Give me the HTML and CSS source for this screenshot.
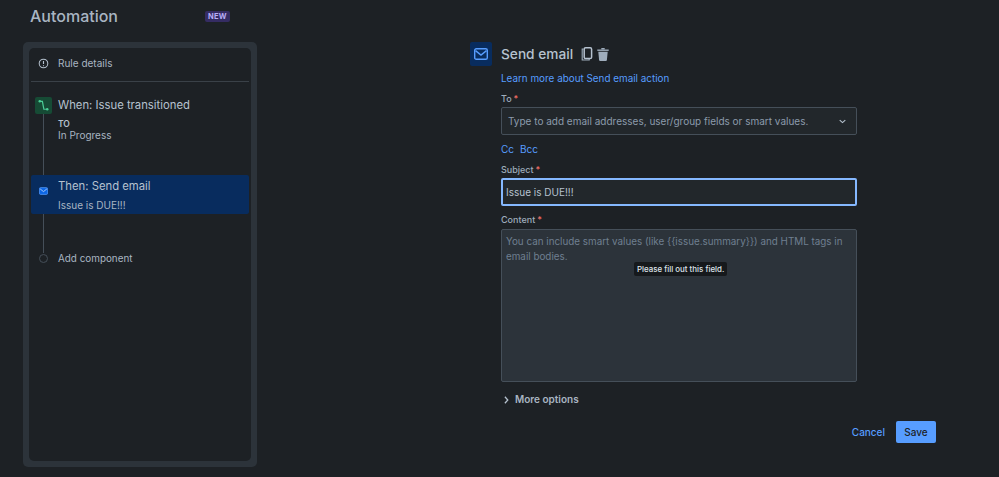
FILE: index.html
```html
<!DOCTYPE html>
<html lang="en">
<head>
<meta charset="utf-8">
<title>Automation</title>
<link rel="stylesheet" href="styles.css">
</head>
<body>
<div class="page">
  <aside class="left">
    <header class="head">
      <h1 class="title">Automation</h1>
      <span class="badge">NEW</span>
    </header>
    <div class="rail">
      <div class="rail-inner">
        <div class="details">
          <svg class="info" viewBox="0 0 12 12" width="11" height="11"><circle cx="6" cy="6" r="4.7" fill="none" stroke="#b6c2cf" stroke-width="1.1"/><path d="M6 3.2v3.4M6 7.9v1" stroke="#b6c2cf" stroke-width="1.2" fill="none"/></svg>
          <span>Rule details</span>
        </div>
        <div class="step when">
          <div class="step-icon green">
            <svg viewBox="0 0 16 16" width="15" height="15"><path d="M4 3.5h2.8l1.6 8.5H12" fill="none" stroke="#4bce97" stroke-width="1.3"/><circle cx="4" cy="3.5" r="1.3" fill="#4bce97"/><circle cx="12" cy="12" r="1.3" fill="#4bce97"/></svg>
          </div>
          <div class="step-text">
            <div class="step-title">When: Issue transitioned</div>
            <div class="to">TO</div>
            <div class="sub">In Progress</div>
          </div>
        </div>
        <div class="step then">
          <div class="step-icon mail">
            <svg viewBox="0 0 12 10" width="9" height="8"><rect x="0.5" y="0.5" width="11" height="9" rx="1.5" fill="#0c66e4" stroke="#579dff"/><path d="M1.5 2.2 6 5.8l4.5-3.6" fill="none" stroke="#cce0ff" stroke-width="1"/></svg>
          </div>
          <div class="step-text">
            <div class="step-title">Then: Send email</div>
            <div class="sub issue">Issue is DUE!!!</div>
          </div>
        </div>
        <div class="step add">
          <div class="dot"></div>
          <div class="add-label">Add component</div>
        </div>
      </div>
    </div>
  </aside>
  <main class="main">
    <div class="action-icon">
      <svg viewBox="0 0 14 12" width="14" height="12"><rect x="0.7" y="0.7" width="12.6" height="10.6" rx="1.6" fill="none" stroke="#579dff" stroke-width="1.4"/><path d="M1.5 2.6 7 7l5.5-4.4" fill="none" stroke="#579dff" stroke-width="1.4"/></svg>
    </div>
    <div class="form">
      <div class="form-head">
        <h2 class="form-title">Send email</h2>
        <svg class="tool" viewBox="0 0 12 14" width="12" height="14"><path d="M2.6 2H1.2v11h7v-1" fill="none" stroke="#9fadbc" stroke-width="1.1"/><rect x="3.2" y="0.8" width="7.4" height="10.8" rx="1.4" fill="none" stroke="#b6c2cf" stroke-width="1.5"/></svg>
        <svg class="tool" viewBox="0 0 12 13" width="12" height="13"><path d="M0.3 1.5h11.4v1.4H.3z" fill="#9fadbc"/><path d="M4.3 0h3.4v1.5H4.3z" fill="#9fadbc"/><path d="M1.3 3.8h9.4l-.8 8.2a1 1 0 0 1-1 .9H3.1a1 1 0 0 1-1-.9z" fill="#9fadbc"/></svg>
      </div>
      <a class="link learn">Learn more about Send email action</a>
      <label class="label to-label">To<span class="req">*</span></label>
      <div class="select">
        <span>Type to add email addresses, user/group fields or smart values.</span>
        <svg viewBox="0 0 10 6" width="7" height="5"><path d="M1 1l4 3.6L9 1" fill="none" stroke="#b6c2cf" stroke-width="1.6"/></svg>
      </div>
      <div class="ccs"><a class="link">Cc</a><a class="link">Bcc</a></div>
      <label class="label subj-label">Subject<span class="req">*</span></label>
      <div class="subject">Issue is DUE!!!</div>
      <label class="label cont-label">Content<span class="req">*</span></label>
      <div class="content">
        <p class="placeholder">You can include smart values (like {{issue.summary}}) and HTML tags in email bodies.</p>
        <div class="tip">Please fill out this field.</div>
      </div>
      <div class="more">
        <svg viewBox="0 0 6 10" width="5" height="8"><path d="M1 1l3.6 4L1 9" fill="none" stroke="#b6c2cf" stroke-width="1.6"/></svg>
        <span>More options</span>
      </div>
    </div>
    <div class="actions">
      <a class="link cancel">Cancel</a>
      <button class="save">Save</button>
    </div>
  </main>
</div>
</body>
</html>
```

FILE: styles.css
```css
* { box-sizing: border-box; }
html, body { margin: 0; height: 100%; }
body {
  background: #1d2125;
  color: #b6c2cf;
  font-family: Inter, "Liberation Sans", sans-serif;
  overflow: hidden;
}
.page { display: flex; width: 999px; height: 477px; }
.left { width: 234px; margin-left: 23px; flex: none; }
.head { display: flex; align-items: center; height: 42px; padding: 0 0 10px 7px; }
.title { margin: 0; font-size: 16px; font-weight: 500; color: #a9b5c2; line-height: 32px; }
.badge {
  margin-left: 87px; background: #352c63; color: #b8acf6; font-size: 7.5px; font-weight: 700;
  padding: 0 3px; height: 11px; line-height: 11px; border-radius: 2px; letter-spacing: 0.3px;
}
.rail { width: 234px; height: 425px; background: #2c333a; padding: 6px; border-radius: 5px; }
.rail-inner { height: 413px; background: #1d2125; border-radius: 5px; padding: 0 2px; }
.details {
  display: flex; align-items: center; height: 34px; border-bottom: 1px solid #3a4148;
  padding: 0 0 3px 7px; gap: 9px; font-size: 10px; color: #a9b5c2;
}
.info { flex: none; }
.step { display: flex; position: relative; }
.step-icon { width: 17px; height: 17px; flex: none; display: flex; align-items: center; justify-content: center; border-radius: 2px; }
.green { background: #164b35; }
.step-title { font-size: 11.3px; color: #b6c2cf; line-height: 16px; }
.when { margin-top: 15px; padding-left: 4px; height: 78px; }
.when::after, .then::after { content: ""; position: absolute; left: 12px; width: 1px; background: #454f59; }
.when::after { top: 17px; height: 61px; }
.when .step-text { margin-left: 6px; }
.to { font-size: 8.5px; font-weight: 600; line-height: 10px; margin-top: 6px; color: #b6c2cf; }
.sub { font-size: 10px; line-height: 12px; color: #a9b5c2; }
.then { background: #082c5e; height: 39px; border-radius: 2px; padding-left: 4px; }
.then::after { top: 39px; height: 39px; }
.then .step-icon { margin-top: 7px; }
.then .step-text { margin-left: 6px; margin-top: 3px; }
.issue { margin-top: 5px; }
.add { margin-top: 39px; padding-left: 8px; align-items: center; height: 10px; }
.dot { width: 9px; height: 9px; border: 1px solid #454f59; border-radius: 50%; background: #1d2125; flex: none; }
.add-label { font-size: 9.9px; margin-left: 10px; color: #a9b5c2; }

.main { flex: none; display: flex; flex-wrap: wrap; margin-left: 213px; width: 466px; align-content: flex-start; padding-top: 42px; }
.action-icon { width: 22px; height: 24px; background: #082c5e; border-radius: 2px; display: flex; align-items: center; justify-content: center; flex: none; }
.form { width: 356px; margin-left: 9px; flex: none; }
.form-head { display: flex; align-items: center; height: 24px; }
.form-title { margin: 0 8px 0 0; font-size: 13.7px; font-weight: 500; color: #b6c2cf; }
.tool { margin-right: 4px; }
.link { color: #579dff; font-size: 10px; }
.learn { display: block; margin-top: 6px; line-height: 13px; font-size: 9.9px; }
.label { display: block; font-size: 9px; font-weight: 500; color: #9fadbc; line-height: 12px; }
.req { color: #f87168; margin-left: 2px; }
.to-label { margin-top: 8px; }
.select {
  display: flex; align-items: center; justify-content: space-between; height: 28px; margin-top: 2px;
  background: #22272b; border: 1px solid #454f59; border-radius: 2px; padding: 0 10px 0 6px;
  font-size: 10px; color: #8c9bab;
}
.ccs { display: flex; gap: 6px; margin-top: 7px; line-height: 14px; }
.subj-label { margin-top: 8px; }
.subject {
  height: 28px; margin-top: 2px; background: #22272b; border: 2px solid #85b8ff; border-radius: 2px;
  font-size: 10px; color: #b6c2cf; line-height: 24px; padding-left: 3px;
}
.cont-label { margin-top: 8px; }
.content {
  height: 153px; margin-top: 3px; background: #2c333a; border: 1px solid #454f59; border-radius: 2px;
  position: relative; padding: 4px 4px;
}
.placeholder { margin: 0; font-size: 9.85px; line-height: 14.5px; color: #6f7f90; }
.tip {
  position: absolute; left: 132px; top: 32px; background: #16191c; color: #dee4ea;
  font-size: 7.9px; font-weight: 500; line-height: 14px; height: 14px; padding: 0 3px; border-radius: 2px; white-space: nowrap;
}
.more { display: flex; align-items: center; gap: 6px; margin-top: 11px; padding-left: 3px; font-size: 10px; font-weight: 600; color: #a9b5c2; line-height: 13px; }
.actions { width: 100%; display: flex; justify-content: flex-end; align-items: center; gap: 11px; margin-top: 15px; }
.cancel { font-weight: 500; }
.save { height: 22px; width: 40px; background: #579dff; color: #1d2125; border: 0; border-radius: 2px; font: 500 10px Inter, "Liberation Sans", sans-serif; padding: 0; }
```
